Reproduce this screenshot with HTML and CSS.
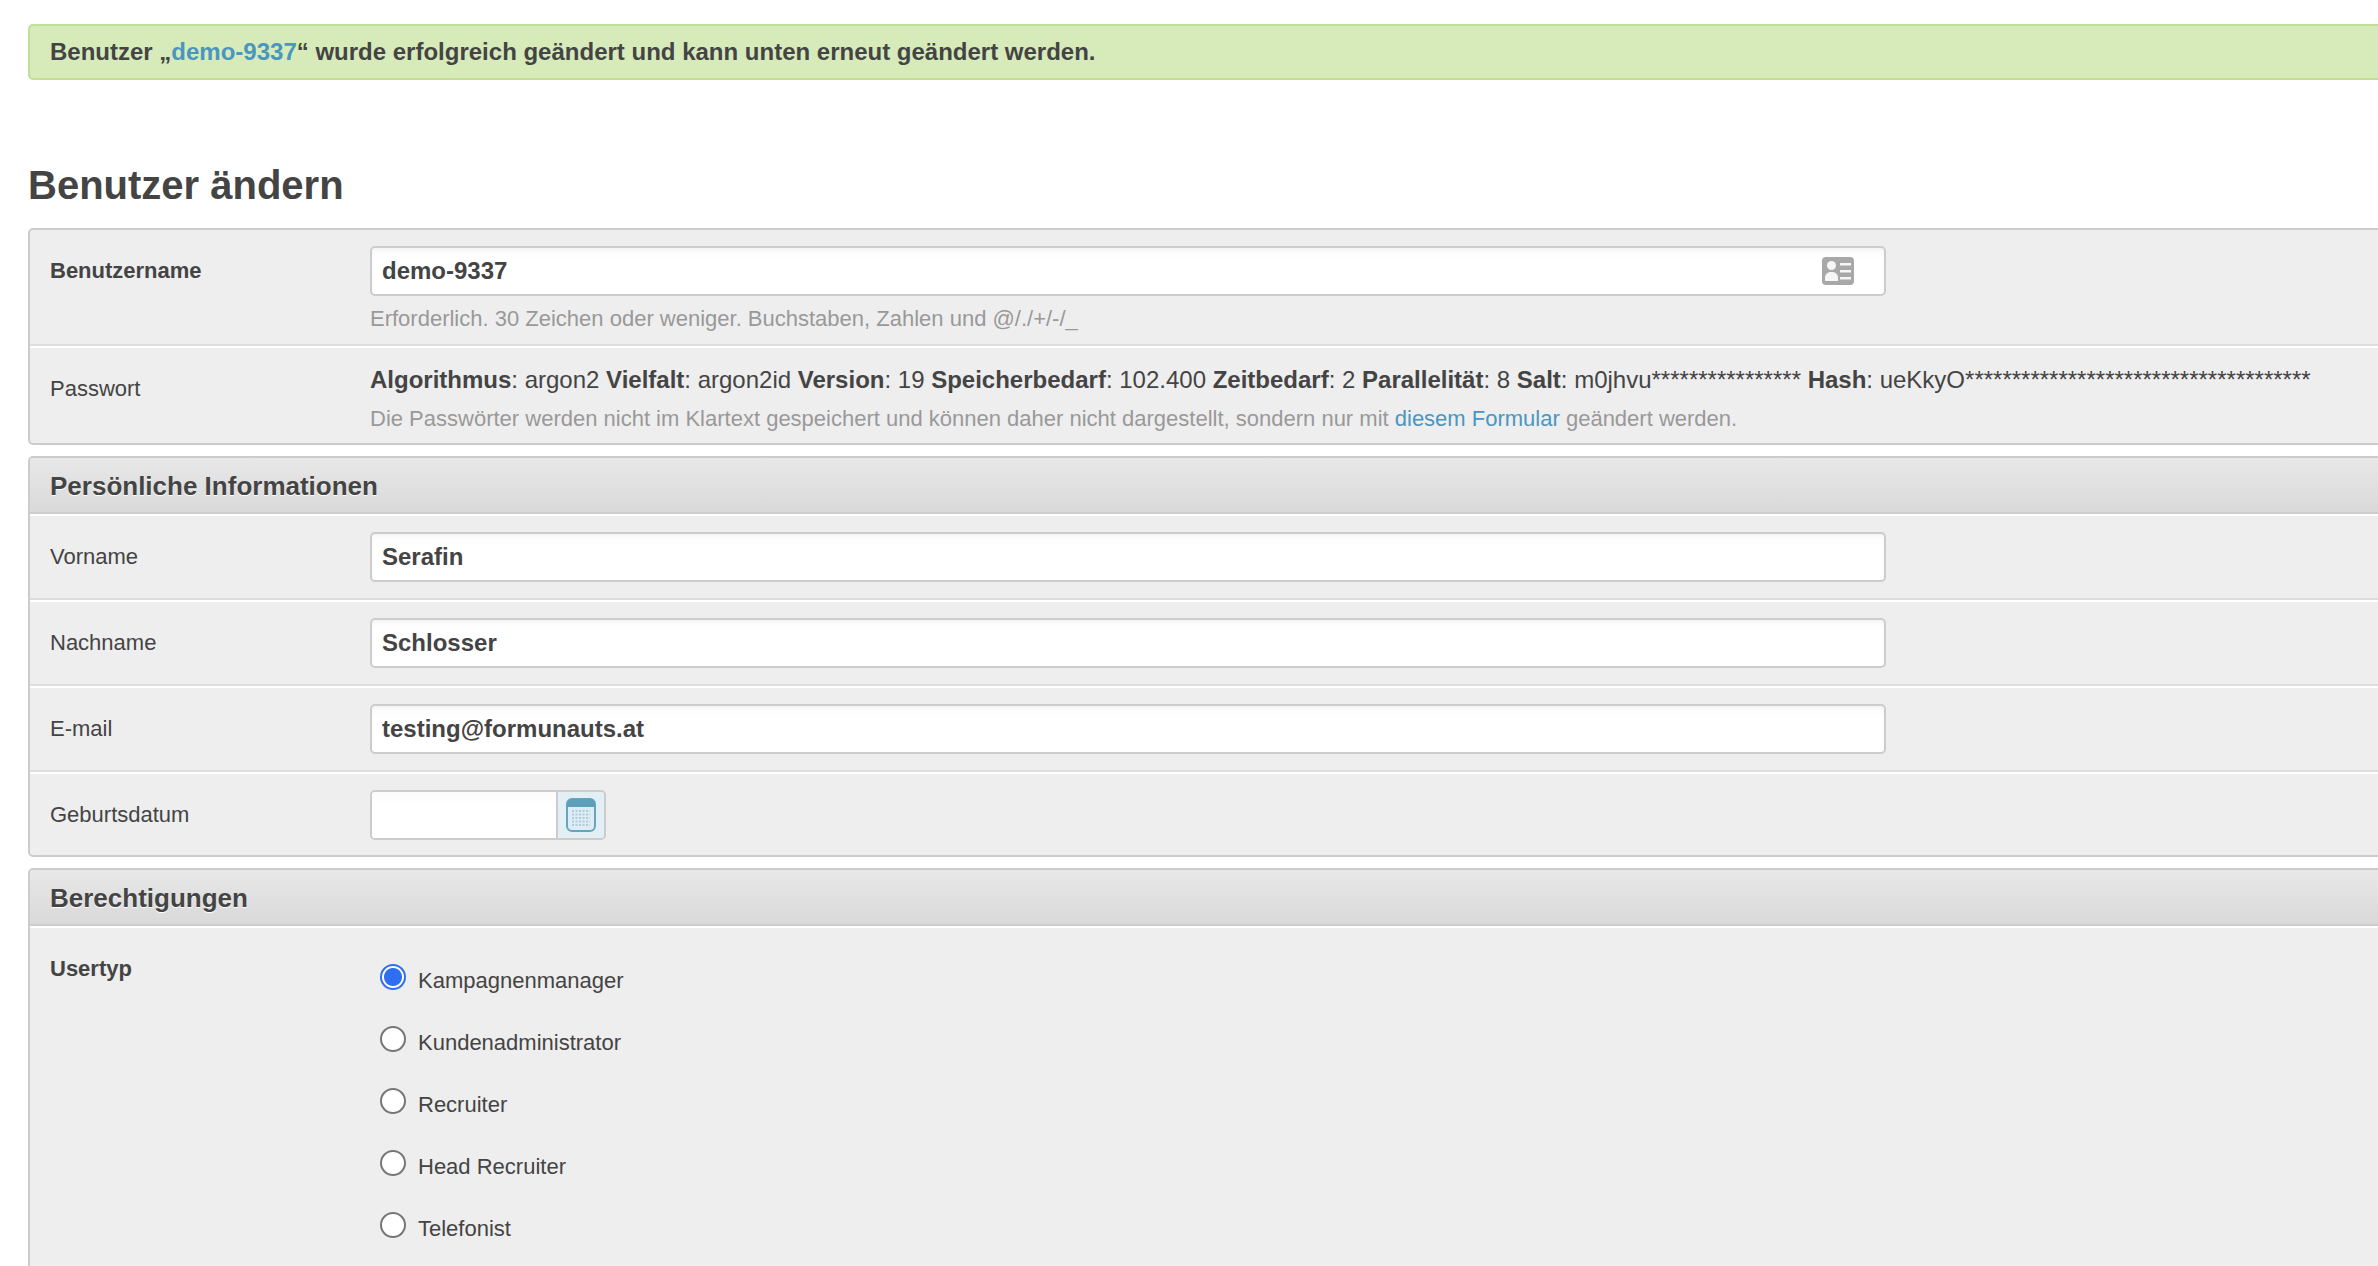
FILE: index.html
```html
<!DOCTYPE html>
<html lang="de">
<head>
<meta charset="utf-8">
<title>Benutzer ändern</title>
<link rel="stylesheet" href="styles.css">
</head>
<body>
<main class="page">
  <p class="message">Benutzer „<a href="#">demo-9337</a>“ wurde erfolgreich geändert und kann unten erneut geändert werden.</p>
  <h1 class="title">Benutzer ändern</h1>
  <form>
    <section class="module">
      <div class="row row-first">
        <label class="label label-strong">Benutzername</label>
        <div class="content">
          <div class="field-wrap">
            <input class="field" type="text" value="demo-9337">
            <svg class="id-icon" viewBox="0 0 32 28" width="32" height="28" aria-hidden="true">
              <rect width="32" height="28" rx="4" fill="#a8a8a8"/>
              <circle cx="9.500" cy="8.500" r="4.500" fill="#f6f6f6"/>
              <path d="M3 24v-3.500c0-3.500 3-5.500 6.500-5.500s6.500 2 6.500 5.500v3.500z" fill="#f6f6f6"/>
              <rect x="18" y="6" width="11" height="2.500" fill="#f6f6f6"/>
              <rect x="18" y="13" width="11" height="2.500" fill="#f6f6f6"/>
              <rect x="18" y="20" width="11" height="2.500" fill="#f6f6f6"/>
            </svg>
          </div>
          <p class="help">Erforderlich. 30 Zeichen oder weniger. Buchstaben, Zahlen und @/./+/-/_</p>
        </div>
      </div>
      <div class="row row-last row-password">
        <label class="label label-password">Passwort</label>
        <div class="content">
          <div class="hash"><strong>Algorithmus</strong>: argon2 <strong>Vielfalt</strong>: argon2id <strong>Version</strong>: 19 <strong>Speicherbedarf</strong>: 102.400 <strong>Zeitbedarf</strong>: 2 <strong>Parallelität</strong>: 8 <strong>Salt</strong>: m0jhvu**************** <strong>Hash</strong>: ueKkyO*************************************</div>
          <p class="help help-password">Die Passwörter werden nicht im Klartext gespeichert und können daher nicht dargestellt, sondern nur mit <a href="#">diesem Formular</a> geändert werden.</p>
        </div>
      </div>
    </section>

    <section class="module">
      <h2 class="module-title">Persönliche Informationen</h2>
      <div class="row row-field">
        <label class="label label-field">Vorname</label>
        <div class="content"><input class="field" type="text" value="Serafin"></div>
      </div>
      <div class="row row-field">
        <label class="label label-field">Nachname</label>
        <div class="content"><input class="field" type="text" value="Schlosser"></div>
      </div>
      <div class="row row-field">
        <label class="label label-field">E-mail</label>
        <div class="content"><input class="field" type="text" value="testing@formunauts.at"></div>
      </div>
      <div class="row row-field row-last">
        <label class="label label-field">Geburtsdatum</label>
        <div class="content">
          <div class="date">
            <input class="date-input" type="text">
            <span class="date-button">
              <svg viewBox="0 0 30 34" width="30" height="34" aria-hidden="true">
                <rect x="1" y="1" width="28" height="32" rx="5" fill="#dfecf3" stroke="#66a5c0" stroke-width="2"/>
                <path d="M1 9V6a5 5 0 0 1 5-5h18a5 5 0 0 1 5 5v3z" fill="#5e9fbb"/>
                <path d="M6 13h18M6 16.500h18M6 20h18M6 23.500h18M6 27h18" stroke="#a8cfe0" stroke-width="2" stroke-dasharray="2 1.500" fill="none"/>
              </svg>
            </span>
          </div>
        </div>
      </div>
    </section>

    <section class="module module-open">
      <h2 class="module-title">Berechtigungen</h2>
      <div class="row row-last row-radios">
        <label class="label label-strong label-radios">Usertyp</label>
        <ul class="radios">
          <li class="radio"><input class="radio-input" type="radio" name="usertyp" id="u1" checked><label for="u1">Kampagnenmanager</label></li>
          <li class="radio"><input class="radio-input" type="radio" name="usertyp" id="u2"><label for="u2">Kundenadministrator</label></li>
          <li class="radio"><input class="radio-input" type="radio" name="usertyp" id="u3"><label for="u3">Recruiter</label></li>
          <li class="radio"><input class="radio-input" type="radio" name="usertyp" id="u4"><label for="u4">Head Recruiter</label></li>
          <li class="radio"><input class="radio-input" type="radio" name="usertyp" id="u5"><label for="u5">Telefonist</label></li>
        </ul>
      </div>
    </section>
  </form>
</main>
</body>
</html>
```

FILE: styles.css
```css
html, body {
  margin: 0;
  height: 100%;
  overflow: hidden;
  background: #fff;
}

body {
  font-family: "Liberation Sans", Arial, sans-serif;
  font-size: 22px;
  color: #444;
}

.page {
  width: 2440px;
  padding: 24px 0 0 28px;
}

a {
  color: #4a96c0;
  text-decoration: none;
}

.message {
  margin: 0 0 81px;
  height: 52px;
  line-height: 52px;
  padding-left: 20px;
  background: #d6ebb9;
  border: 2px solid #c0df97;
  border-radius: 5px;
  font-weight: bold;
  font-size: 24px;
}

.title {
  margin: 0 0 19px;
  font-size: 40px;
  line-height: 48px;
  font-weight: bold;
  color: #444;
}

.module {
  background: #eee;
  border: 2px solid #ccc;
  border-radius: 5px;
  margin-bottom: 11px;
  overflow: hidden;
}

.module-open {
  height: 500px;
}

.module-title {
  margin: 0;
  height: 54px;
  line-height: 57px;
  padding-left: 20px;
  font-size: 26px;
  font-weight: bold;
  color: #444;
  text-shadow: 0 1px 0 #fff;
  background: linear-gradient(#e8e8e8, #d9d9d9);
  border-bottom: 2px solid #ccc;
}

.row {
  display: flex;
  padding: 0 0 0 20px;
  border-top: 2px solid #fff;
  border-bottom: 2px solid #ddd;
}

.row-first {
  border-top: 0;
}

.row-last {
  border-bottom: 0;
}

.row-field {
  padding-top: 16px;
  padding-bottom: 16px;
  align-items: center;
}

.row-field.row-last {
  padding-bottom: 15px;
}

.label {
  flex: 0 0 320px;
  line-height: 24px;
}

.label-strong {
  font-weight: bold;
}

.content {
  flex: 1;
}

.row-first {
  padding-top: 16px;
  padding-bottom: 13px;
}

.row-first .label {
  line-height: 50px;
}

.row-password {
  padding-top: 16px;
  padding-bottom: 12px;
}

.label-password {
  margin-top: 13px;
}

.field-wrap {
  position: relative;
  width: 1516px;
}

.field {
  display: block;
  box-sizing: border-box;
  width: 1516px;
  height: 50px;
  padding: 0 10px;
  border: 2px solid #ccc;
  border-radius: 5px;
  background: linear-gradient(#fbfbfb, #fff 12px);
  box-shadow: inset 0 2px 3px rgba(0, 0, 0, .03);
  outline: 0;
  font-family: inherit;
  font-size: 24px;
  font-weight: bold;
  color: #444;
}

.id-icon {
  position: absolute;
  top: 11px;
  right: 32px;
}

.help {
  margin: 11px 0 0;
  line-height: 24px;
  font-size: 22px;
  color: #999;
}

.help-password {
  margin-top: 12px;
}

.hash {
  font-size: 24px;
  line-height: 31px;
  white-space: nowrap;
}

.date {
  display: flex;
  box-sizing: border-box;
  width: 236px;
  height: 50px;
  border: 2px solid #ccc;
  border-radius: 5px;
  overflow: hidden;
}

.date-input {
  box-sizing: border-box;
  flex: 0 0 186px;
  width: 186px;
  height: 46px;
  border: 0;
  border-right: 2px solid #ccc;
  padding: 0 10px;
  background: linear-gradient(#fbfbfb, #fff 12px);
  outline: 0;
}

.date-button {
  flex: 1;
  display: flex;
  align-items: center;
  justify-content: center;
  background: #e2eff5;
}

.row-radios {
  padding-top: 21px;
}

.label-radios {
  margin-top: 8px;
}

.radios {
  list-style: none;
  margin: 0;
  padding: 0 0 0 10px;
}

.radio {
  display: flex;
  align-items: center;
  height: 62px;
}

.radio-input {
  appearance: none;
  box-sizing: border-box;
  width: 26px;
  height: 26px;
  margin: 0 12px 6px 0;
  border: 2px solid #767676;
  border-radius: 50%;
  background: #fff;
}

.radio-input:checked {
  border-color: #2e6ff2;
  background: radial-gradient(circle, #2e6ff2 0 8.5px, #fff 9.5px);
}

.radio label {
  line-height: 24px;
  padding-top: 2px;
}
```
